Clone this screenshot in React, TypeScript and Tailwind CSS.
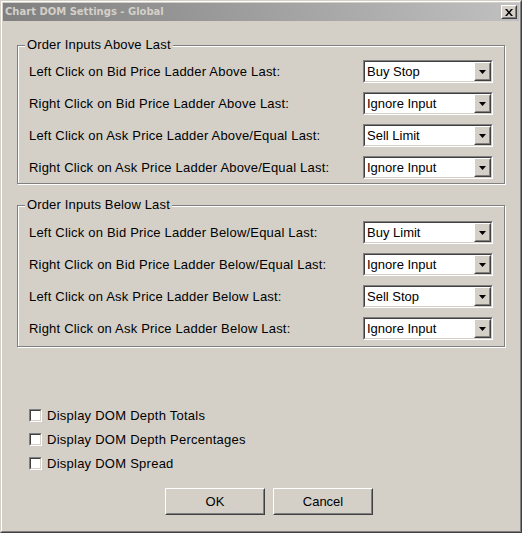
import React from "react";

type Row = { label: string; value: string };

const aboveRows: Row[] = [
  { label: "Left Click on Bid Price Ladder Above Last:", value: "Buy Stop" },
  { label: "Right Click on Bid Price Ladder Above Last:", value: "Ignore Input" },
  { label: "Left Click on Ask Price Ladder Above/Equal Last:", value: "Sell Limit" },
  { label: "Right Click on Ask Price Ladder Above/Equal Last:", value: "Ignore Input" },
];

const belowRows: Row[] = [
  { label: "Left Click on Bid Price Ladder Below/Equal Last:", value: "Buy Limit" },
  { label: "Right Click on Bid Price Ladder Below/Equal Last:", value: "Ignore Input" },
  { label: "Left Click on Ask Price Ladder Below Last:", value: "Sell Stop" },
  { label: "Right Click on Ask Price Ladder Below Last:", value: "Ignore Input" },
];

const checks = ["Display DOM Depth Totals", "Display DOM Depth Percentages", "Display DOM Spread"];

// raised 3d frame used by buttons
function Raised({ className, children }: { className?: string; children?: React.ReactNode }) {
  return (
    <div className={`border border-t-white border-l-white border-r-[#404040] border-b-[#404040] ${className ?? ""}`}>
      <div className="h-full w-full border border-t-[#d4d0c8] border-l-[#d4d0c8] border-r-[#808080] border-b-[#808080] bg-[#d4d0c8] flex items-center justify-center">
        {children}
      </div>
    </div>
  );
}

function ComboBox({ value }: { value: string }) {
  return (
    <div className="w-[130px] h-[23px] border border-t-[#808080] border-l-[#808080] border-r-white border-b-white">
      <div className="h-full border border-t-[#404040] border-l-[#404040] border-r-[#d4d0c8] border-b-[#d4d0c8] bg-white flex items-center">
        <span className="flex-1 pl-[2px] text-[13px] text-black leading-none">{value}</span>
        <Raised className="w-[17px] h-[19px]">
          <svg width="7" height="4" viewBox="0 0 7 4">
            <path d="M0 0h7L3.5 4z" fill="#000" />
          </svg>
        </Raised>
      </div>
    </div>
  );
}

function GroupBox({ title, rows, className, pad }: { title: string; rows: Row[]; className?: string; pad: string }) {
  return (
    <div className={`relative border border-[#808080] ml-[14px] mr-[14px] ${className ?? ""}`}>
      <div className="border-t border-l border-white">
        <span className="absolute -top-[9px] left-[7px] px-[2px] bg-[#d4d0c8] text-[13px] leading-[16px] tracking-[0.15px] text-black">
          {title}
        </span>
        <div className={`flex flex-col gap-[9px] pl-[10px] pr-[11px] ${pad}`}>
          {rows.map((r) => (
            <div key={r.label} className="flex items-center justify-between">
              <span className="text-[13px] tracking-[0.2px] text-black">{r.label}</span>
              <ComboBox value={r.value} />
            </div>
          ))}
        </div>
      </div>
      <div className="absolute right-[-2px] top-0 bottom-[-2px] w-px bg-white" />
      <div className="absolute left-0 right-[-2px] bottom-[-2px] h-px bg-white" />
    </div>
  );
}

export default function App() {
  return (
    <div className="w-[522px] h-[533px] bg-[#d4d0c8] font-['Liberation_Sans',Arial,sans-serif]">
      {/* window frame */}
      <div className="h-full border border-t-[#d4d0c8] border-l-[#d4d0c8] border-r-[#404040] border-b-[#404040]">
        <div className="h-full border border-t-white border-l-white border-r-[#808080] border-b-[#808080] p-px flex flex-col">
          {/* title bar */}
          <div className="h-[18px] flex items-center justify-between pl-[2px] pr-[2px] bg-gradient-to-r from-[#808080] to-[#c0c0c0]">
            <span className="text-[10px] font-bold text-[#d4d0c8] font-['DejaVu_Sans',sans-serif] leading-none">
              Chart DOM Settings - Global
            </span>
            <Raised className="w-[16px] h-[14px]">
              <svg width="8" height="7" viewBox="0 0 8 7">
                <path d="M0 0h2l2 2.5L6 0h2L5 3.5 8 7H6L4 4.5 2 7H0l3-3.5z" fill="#000" />
              </svg>
            </Raised>
          </div>

          <div className="flex-1 flex flex-col pt-[24px]">
            <GroupBox title="Order Inputs Above Last" rows={aboveRows} pad="pt-[13px] pb-[4px]" />
            <GroupBox title="Order Inputs Below Last" rows={belowRows} pad="pt-[14px] pb-[6px]" className="mt-[21px]" />

            <div className="flex flex-col gap-[11px] mt-[62px] pl-[26px]">
              {checks.map((c) => (
                <label key={c} className="flex items-center gap-[5px] h-[13px]">
                  <span className="w-[13px] h-[13px] border border-t-[#808080] border-l-[#808080] border-r-white border-b-white">
                    <span className="block w-full h-full border border-t-[#404040] border-l-[#404040] border-r-[#d4d0c8] border-b-[#d4d0c8] bg-white" />
                  </span>
                  <span className="text-[13px] tracking-[0.25px] text-black">{c}</span>
                </label>
              ))}
            </div>

            <div className="flex gap-[8px] mt-[18px] pl-[162px]">
              <Raised className="w-[100px] h-[27px]">
                <span className="text-[13px] text-black">OK</span>
              </Raised>
              <Raised className="w-[100px] h-[27px]">
                <span className="text-[13px] text-black">Cancel</span>
              </Raised>
            </div>
          </div>
        </div>
      </div>
    </div>
  );
}
